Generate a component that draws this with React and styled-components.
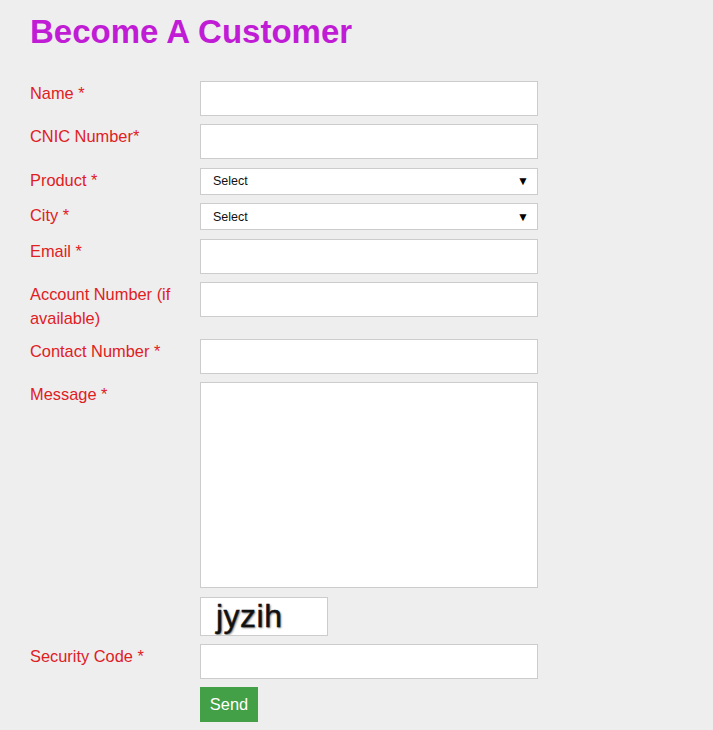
import React from 'react';
import styled, { createGlobalStyle } from 'styled-components';

const GlobalStyle = createGlobalStyle`
  html, body {
    margin: 0;
    padding: 0;
    background: #eeeeee;
  }
  body {
    font-family: "Liberation Sans", Arial, sans-serif;
  }
`;

const Page = styled.div`
  padding: 10px 30px 20px 30px;
  width: 653px;
`;

const Title = styled.h1`
  margin: 0 0 27px 0;
  font-size: 33px;
  line-height: 44px;
  font-weight: bold;
  color: #c11cd5;
`;

const Form = styled.form`
  display: flex;
  flex-direction: column;
  gap: 8.45px;
`;

const Row = styled.div`
  display: flex;
  align-items: flex-start;
`;

const Label = styled.label`
  width: 170px;
  flex-shrink: 0;
  padding-right: 10px;
  box-sizing: border-box;
  font-size: 16.4px;
  line-height: 24px;
  color: #e0201f;
`;

const Field = styled.div`
  width: 338px;
  display: flex;
  flex-direction: column;
`;

const TextInput = styled.input`
  width: 338px;
  height: 35px;
  box-sizing: border-box;
  border: 1px solid #cccccc;
  background: #ffffff;
  margin: 0;
  padding: 0 8px;
  font-family: inherit;
  font-size: 14px;
  outline: none;
`;

const TextArea = styled.textarea`
  width: 338px;
  height: 206px;
  box-sizing: border-box;
  border: 1px solid #cccccc;
  background: #ffffff;
  margin: 0;
  padding: 6px 8px;
  resize: none;
  font-family: inherit;
  font-size: 14px;
  outline: none;
`;

const SelectBox = styled.div`
  width: 338px;
  height: 27px;
  box-sizing: border-box;
  border: 1px solid #cccccc;
  background: #ffffff;
  display: flex;
  align-items: center;
  justify-content: space-between;
  padding: 0 8px 0 12px;
  font-size: 12.5px;
  color: #111111;
`;

const Arrow = styled.span`
  font-size: 12px;
  color: #000000;
  line-height: 1;
`;

const Captcha = styled.div`
  width: 128px;
  height: 39px;
  box-sizing: border-box;
  border: 1px solid #cccccc;
  background: #ffffff;
  padding-left: 15px;
  font-size: 32px;
  line-height: 36px;
  color: #111111;
  letter-spacing: 0.5px;
  -webkit-text-stroke: 0.4px #111111;
  text-shadow: 1px 1px 2px rgba(0, 0, 0, 0.55);
  overflow: hidden;
`;

const SendButton = styled.button`
  width: 58px;
  height: 35px;
  border: none;
  background: #43a047;
  color: #ffffff;
  font-family: inherit;
  font-size: 16.4px;
  padding: 0;
  cursor: pointer;
`;

const Spacer = styled.div`
  width: 170px;
  flex-shrink: 0;
`;

const Select = ({ label }) => (
  <SelectBox>
    <span>{label}</span>
    <Arrow>▼</Arrow>
  </SelectBox>
);

const App = () => {
  const textRows = [
    { key: 'name', label: 'Name *' },
    { key: 'cnic', label: 'CNIC Number*' },
  ];

  return (
    <Page>
      <GlobalStyle />
      <Title>Become A Customer</Title>
      <Form onSubmit={e => e.preventDefault()}>
        {textRows.map(row => (
          <Row key={row.key}>
            <Label>{row.label}</Label>
            <Field><TextInput /></Field>
          </Row>
        ))}
        <Row>
          <Label>Product *</Label>
          <Field><Select label="Select" /></Field>
        </Row>
        <Row>
          <Label>City *</Label>
          <Field><Select label="Select" /></Field>
        </Row>
        <Row>
          <Label>Email *</Label>
          <Field><TextInput /></Field>
        </Row>
        <Row>
          <Label>Account Number (if available)</Label>
          <Field><TextInput /></Field>
        </Row>
        <Row>
          <Label>Contact Number *</Label>
          <Field><TextInput /></Field>
        </Row>
        <Row>
          <Label>Message *</Label>
          <Field><TextArea /></Field>
        </Row>
        <Row>
          <Spacer />
          <Captcha>jyzih</Captcha>
        </Row>
        <Row>
          <Label>Security Code *</Label>
          <Field><TextInput /></Field>
        </Row>
        <Row>
          <Spacer />
          <SendButton type="submit">Send</SendButton>
        </Row>
      </Form>
    </Page>
  );
};

export default App;
